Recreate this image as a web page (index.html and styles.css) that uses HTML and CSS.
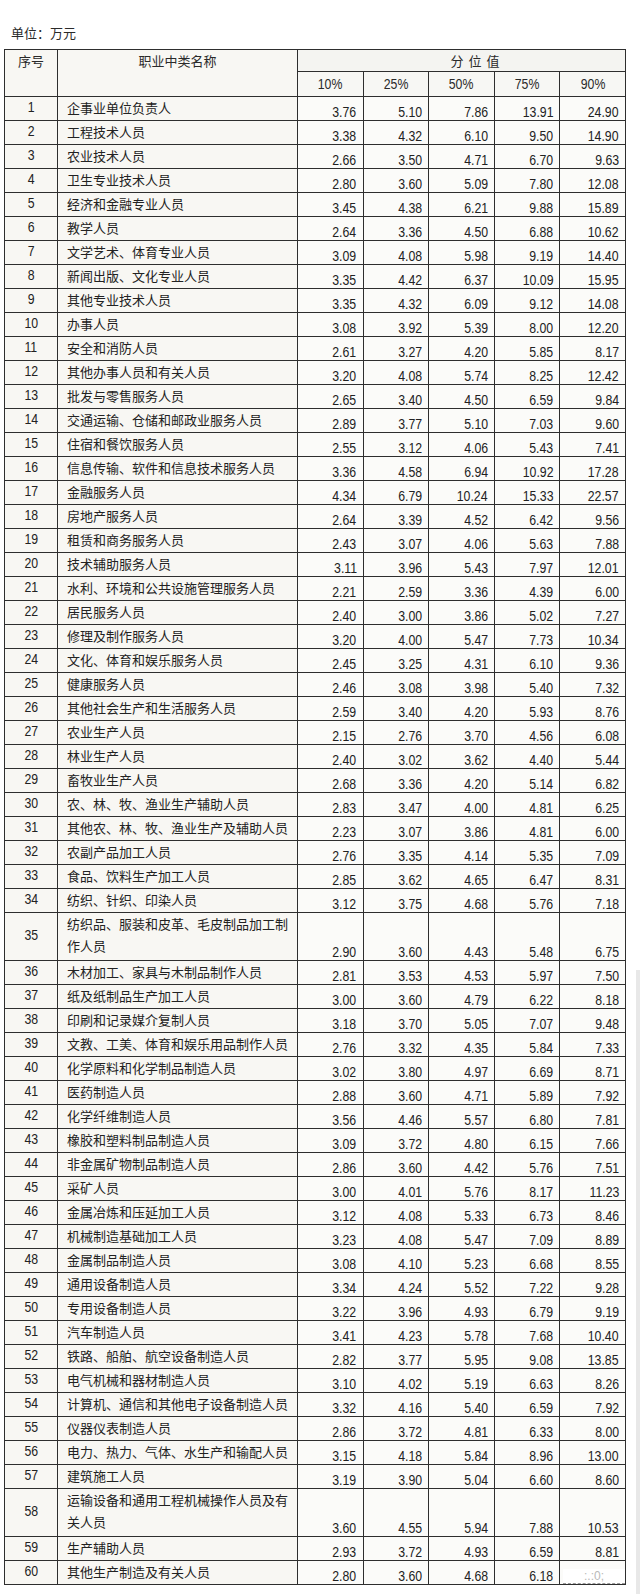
FILE: index.html
```html
<!DOCTYPE html>
<html lang="zh">
<head>
<meta charset="utf-8">
<title>分位值</title>
<link rel="stylesheet" href="styles.css">
</head>
<body>
<div class="page">
  <div class="unit">单位：万元</div>
  <table class="tbl">
    <colgroup>
      <col class="c-no"><col class="c-name"><col class="c-v"><col class="c-v"><col class="c-v"><col class="c-v"><col class="c-v">
    </colgroup>
    <thead>
      <tr class="hr1">
        <th class="h-no" rowspan="2">序号</th>
        <th class="h-name" rowspan="2">职业中类名称</th>
        <th class="h-span" colspan="5">分位值</th>
      </tr>
      <tr class="hr2">
        <th class="h-pct"><span>10%</span></th><th class="h-pct"><span>25%</span></th><th class="h-pct"><span>50%</span></th><th class="h-pct"><span>75%</span></th><th class="h-pct"><span>90%</span></th>
      </tr>
    </thead>
    <tbody>
<tr><td class="no"><span>1</span></td><td class="nm">企事业单位负责人</td><td class="v"><span>3.76</span></td><td class="v"><span>5.10</span></td><td class="v"><span>7.86</span></td><td class="v"><span>13.91</span></td><td class="v"><span>24.90</span></td></tr>
<tr><td class="no"><span>2</span></td><td class="nm">工程技术人员</td><td class="v"><span>3.38</span></td><td class="v"><span>4.32</span></td><td class="v"><span>6.10</span></td><td class="v"><span>9.50</span></td><td class="v"><span>14.90</span></td></tr>
<tr><td class="no"><span>3</span></td><td class="nm">农业技术人员</td><td class="v"><span>2.66</span></td><td class="v"><span>3.50</span></td><td class="v"><span>4.71</span></td><td class="v"><span>6.70</span></td><td class="v"><span>9.63</span></td></tr>
<tr><td class="no"><span>4</span></td><td class="nm">卫生专业技术人员</td><td class="v"><span>2.80</span></td><td class="v"><span>3.60</span></td><td class="v"><span>5.09</span></td><td class="v"><span>7.80</span></td><td class="v"><span>12.08</span></td></tr>
<tr><td class="no"><span>5</span></td><td class="nm">经济和金融专业人员</td><td class="v"><span>3.45</span></td><td class="v"><span>4.38</span></td><td class="v"><span>6.21</span></td><td class="v"><span>9.88</span></td><td class="v"><span>15.89</span></td></tr>
<tr><td class="no"><span>6</span></td><td class="nm">教学人员</td><td class="v"><span>2.64</span></td><td class="v"><span>3.36</span></td><td class="v"><span>4.50</span></td><td class="v"><span>6.88</span></td><td class="v"><span>10.62</span></td></tr>
<tr><td class="no"><span>7</span></td><td class="nm">文学艺术、体育专业人员</td><td class="v"><span>3.09</span></td><td class="v"><span>4.08</span></td><td class="v"><span>5.98</span></td><td class="v"><span>9.19</span></td><td class="v"><span>14.40</span></td></tr>
<tr><td class="no"><span>8</span></td><td class="nm">新闻出版、文化专业人员</td><td class="v"><span>3.35</span></td><td class="v"><span>4.42</span></td><td class="v"><span>6.37</span></td><td class="v"><span>10.09</span></td><td class="v"><span>15.95</span></td></tr>
<tr><td class="no"><span>9</span></td><td class="nm">其他专业技术人员</td><td class="v"><span>3.35</span></td><td class="v"><span>4.32</span></td><td class="v"><span>6.09</span></td><td class="v"><span>9.12</span></td><td class="v"><span>14.08</span></td></tr>
<tr><td class="no"><span>10</span></td><td class="nm">办事人员</td><td class="v"><span>3.08</span></td><td class="v"><span>3.92</span></td><td class="v"><span>5.39</span></td><td class="v"><span>8.00</span></td><td class="v"><span>12.20</span></td></tr>
<tr><td class="no"><span>11</span></td><td class="nm">安全和消防人员</td><td class="v"><span>2.61</span></td><td class="v"><span>3.27</span></td><td class="v"><span>4.20</span></td><td class="v"><span>5.85</span></td><td class="v"><span>8.17</span></td></tr>
<tr><td class="no"><span>12</span></td><td class="nm">其他办事人员和有关人员</td><td class="v"><span>3.20</span></td><td class="v"><span>4.08</span></td><td class="v"><span>5.74</span></td><td class="v"><span>8.25</span></td><td class="v"><span>12.42</span></td></tr>
<tr><td class="no"><span>13</span></td><td class="nm">批发与零售服务人员</td><td class="v"><span>2.65</span></td><td class="v"><span>3.40</span></td><td class="v"><span>4.50</span></td><td class="v"><span>6.59</span></td><td class="v"><span>9.84</span></td></tr>
<tr><td class="no"><span>14</span></td><td class="nm">交通运输、仓储和邮政业服务人员</td><td class="v"><span>2.89</span></td><td class="v"><span>3.77</span></td><td class="v"><span>5.10</span></td><td class="v"><span>7.03</span></td><td class="v"><span>9.60</span></td></tr>
<tr><td class="no"><span>15</span></td><td class="nm">住宿和餐饮服务人员</td><td class="v"><span>2.55</span></td><td class="v"><span>3.12</span></td><td class="v"><span>4.06</span></td><td class="v"><span>5.43</span></td><td class="v"><span>7.41</span></td></tr>
<tr><td class="no"><span>16</span></td><td class="nm">信息传输、软件和信息技术服务人员</td><td class="v"><span>3.36</span></td><td class="v"><span>4.58</span></td><td class="v"><span>6.94</span></td><td class="v"><span>10.92</span></td><td class="v"><span>17.28</span></td></tr>
<tr><td class="no"><span>17</span></td><td class="nm">金融服务人员</td><td class="v"><span>4.34</span></td><td class="v"><span>6.79</span></td><td class="v"><span>10.24</span></td><td class="v"><span>15.33</span></td><td class="v"><span>22.57</span></td></tr>
<tr><td class="no"><span>18</span></td><td class="nm">房地产服务人员</td><td class="v"><span>2.64</span></td><td class="v"><span>3.39</span></td><td class="v"><span>4.52</span></td><td class="v"><span>6.42</span></td><td class="v"><span>9.56</span></td></tr>
<tr><td class="no"><span>19</span></td><td class="nm">租赁和商务服务人员</td><td class="v"><span>2.43</span></td><td class="v"><span>3.07</span></td><td class="v"><span>4.06</span></td><td class="v"><span>5.63</span></td><td class="v"><span>7.88</span></td></tr>
<tr><td class="no"><span>20</span></td><td class="nm">技术辅助服务人员</td><td class="v"><span>3.11</span></td><td class="v"><span>3.96</span></td><td class="v"><span>5.43</span></td><td class="v"><span>7.97</span></td><td class="v"><span>12.01</span></td></tr>
<tr><td class="no"><span>21</span></td><td class="nm">水利、环境和公共设施管理服务人员</td><td class="v"><span>2.21</span></td><td class="v"><span>2.59</span></td><td class="v"><span>3.36</span></td><td class="v"><span>4.39</span></td><td class="v"><span>6.00</span></td></tr>
<tr><td class="no"><span>22</span></td><td class="nm">居民服务人员</td><td class="v"><span>2.40</span></td><td class="v"><span>3.00</span></td><td class="v"><span>3.86</span></td><td class="v"><span>5.02</span></td><td class="v"><span>7.27</span></td></tr>
<tr><td class="no"><span>23</span></td><td class="nm">修理及制作服务人员</td><td class="v"><span>3.20</span></td><td class="v"><span>4.00</span></td><td class="v"><span>5.47</span></td><td class="v"><span>7.73</span></td><td class="v"><span>10.34</span></td></tr>
<tr><td class="no"><span>24</span></td><td class="nm">文化、体育和娱乐服务人员</td><td class="v"><span>2.45</span></td><td class="v"><span>3.25</span></td><td class="v"><span>4.31</span></td><td class="v"><span>6.10</span></td><td class="v"><span>9.36</span></td></tr>
<tr><td class="no"><span>25</span></td><td class="nm">健康服务人员</td><td class="v"><span>2.46</span></td><td class="v"><span>3.08</span></td><td class="v"><span>3.98</span></td><td class="v"><span>5.40</span></td><td class="v"><span>7.32</span></td></tr>
<tr><td class="no"><span>26</span></td><td class="nm">其他社会生产和生活服务人员</td><td class="v"><span>2.59</span></td><td class="v"><span>3.40</span></td><td class="v"><span>4.20</span></td><td class="v"><span>5.93</span></td><td class="v"><span>8.76</span></td></tr>
<tr><td class="no"><span>27</span></td><td class="nm">农业生产人员</td><td class="v"><span>2.15</span></td><td class="v"><span>2.76</span></td><td class="v"><span>3.70</span></td><td class="v"><span>4.56</span></td><td class="v"><span>6.08</span></td></tr>
<tr><td class="no"><span>28</span></td><td class="nm">林业生产人员</td><td class="v"><span>2.40</span></td><td class="v"><span>3.02</span></td><td class="v"><span>3.62</span></td><td class="v"><span>4.40</span></td><td class="v"><span>5.44</span></td></tr>
<tr><td class="no"><span>29</span></td><td class="nm">畜牧业生产人员</td><td class="v"><span>2.68</span></td><td class="v"><span>3.36</span></td><td class="v"><span>4.20</span></td><td class="v"><span>5.14</span></td><td class="v"><span>6.82</span></td></tr>
<tr><td class="no"><span>30</span></td><td class="nm">农、林、牧、渔业生产辅助人员</td><td class="v"><span>2.83</span></td><td class="v"><span>3.47</span></td><td class="v"><span>4.00</span></td><td class="v"><span>4.81</span></td><td class="v"><span>6.25</span></td></tr>
<tr><td class="no"><span>31</span></td><td class="nm">其他农、林、牧、渔业生产及辅助人员</td><td class="v"><span>2.23</span></td><td class="v"><span>3.07</span></td><td class="v"><span>3.86</span></td><td class="v"><span>4.81</span></td><td class="v"><span>6.00</span></td></tr>
<tr><td class="no"><span>32</span></td><td class="nm">农副产品加工人员</td><td class="v"><span>2.76</span></td><td class="v"><span>3.35</span></td><td class="v"><span>4.14</span></td><td class="v"><span>5.35</span></td><td class="v"><span>7.09</span></td></tr>
<tr><td class="no"><span>33</span></td><td class="nm">食品、饮料生产加工人员</td><td class="v"><span>2.85</span></td><td class="v"><span>3.62</span></td><td class="v"><span>4.65</span></td><td class="v"><span>6.47</span></td><td class="v"><span>8.31</span></td></tr>
<tr><td class="no"><span>34</span></td><td class="nm">纺织、针织、印染人员</td><td class="v"><span>3.12</span></td><td class="v"><span>3.75</span></td><td class="v"><span>4.68</span></td><td class="v"><span>5.76</span></td><td class="v"><span>7.18</span></td></tr>
<tr class="tall"><td class="no"><span>35</span></td><td class="nm">纺织品、服装和皮革、毛皮制品加工制<br>作人员</td><td class="v"><span>2.90</span></td><td class="v"><span>3.60</span></td><td class="v"><span>4.43</span></td><td class="v"><span>5.48</span></td><td class="v"><span>6.75</span></td></tr>
<tr><td class="no"><span>36</span></td><td class="nm">木材加工、家具与木制品制作人员</td><td class="v"><span>2.81</span></td><td class="v"><span>3.53</span></td><td class="v"><span>4.53</span></td><td class="v"><span>5.97</span></td><td class="v"><span>7.50</span></td></tr>
<tr><td class="no"><span>37</span></td><td class="nm">纸及纸制品生产加工人员</td><td class="v"><span>3.00</span></td><td class="v"><span>3.60</span></td><td class="v"><span>4.79</span></td><td class="v"><span>6.22</span></td><td class="v"><span>8.18</span></td></tr>
<tr><td class="no"><span>38</span></td><td class="nm">印刷和记录媒介复制人员</td><td class="v"><span>3.18</span></td><td class="v"><span>3.70</span></td><td class="v"><span>5.05</span></td><td class="v"><span>7.07</span></td><td class="v"><span>9.48</span></td></tr>
<tr><td class="no"><span>39</span></td><td class="nm">文教、工美、体育和娱乐用品制作人员</td><td class="v"><span>2.76</span></td><td class="v"><span>3.32</span></td><td class="v"><span>4.35</span></td><td class="v"><span>5.84</span></td><td class="v"><span>7.33</span></td></tr>
<tr><td class="no"><span>40</span></td><td class="nm">化学原料和化学制品制造人员</td><td class="v"><span>3.02</span></td><td class="v"><span>3.80</span></td><td class="v"><span>4.97</span></td><td class="v"><span>6.69</span></td><td class="v"><span>8.71</span></td></tr>
<tr><td class="no"><span>41</span></td><td class="nm">医药制造人员</td><td class="v"><span>2.88</span></td><td class="v"><span>3.60</span></td><td class="v"><span>4.71</span></td><td class="v"><span>5.89</span></td><td class="v"><span>7.92</span></td></tr>
<tr><td class="no"><span>42</span></td><td class="nm">化学纤维制造人员</td><td class="v"><span>3.56</span></td><td class="v"><span>4.46</span></td><td class="v"><span>5.57</span></td><td class="v"><span>6.80</span></td><td class="v"><span>7.81</span></td></tr>
<tr><td class="no"><span>43</span></td><td class="nm">橡胶和塑料制品制造人员</td><td class="v"><span>3.09</span></td><td class="v"><span>3.72</span></td><td class="v"><span>4.80</span></td><td class="v"><span>6.15</span></td><td class="v"><span>7.66</span></td></tr>
<tr><td class="no"><span>44</span></td><td class="nm">非金属矿物制品制造人员</td><td class="v"><span>2.86</span></td><td class="v"><span>3.60</span></td><td class="v"><span>4.42</span></td><td class="v"><span>5.76</span></td><td class="v"><span>7.51</span></td></tr>
<tr><td class="no"><span>45</span></td><td class="nm">采矿人员</td><td class="v"><span>3.00</span></td><td class="v"><span>4.01</span></td><td class="v"><span>5.76</span></td><td class="v"><span>8.17</span></td><td class="v"><span>11.23</span></td></tr>
<tr><td class="no"><span>46</span></td><td class="nm">金属冶炼和压延加工人员</td><td class="v"><span>3.12</span></td><td class="v"><span>4.08</span></td><td class="v"><span>5.33</span></td><td class="v"><span>6.73</span></td><td class="v"><span>8.46</span></td></tr>
<tr><td class="no"><span>47</span></td><td class="nm">机械制造基础加工人员</td><td class="v"><span>3.23</span></td><td class="v"><span>4.08</span></td><td class="v"><span>5.47</span></td><td class="v"><span>7.09</span></td><td class="v"><span>8.89</span></td></tr>
<tr><td class="no"><span>48</span></td><td class="nm">金属制品制造人员</td><td class="v"><span>3.08</span></td><td class="v"><span>4.10</span></td><td class="v"><span>5.23</span></td><td class="v"><span>6.68</span></td><td class="v"><span>8.55</span></td></tr>
<tr><td class="no"><span>49</span></td><td class="nm">通用设备制造人员</td><td class="v"><span>3.34</span></td><td class="v"><span>4.24</span></td><td class="v"><span>5.52</span></td><td class="v"><span>7.22</span></td><td class="v"><span>9.28</span></td></tr>
<tr><td class="no"><span>50</span></td><td class="nm">专用设备制造人员</td><td class="v"><span>3.22</span></td><td class="v"><span>3.96</span></td><td class="v"><span>4.93</span></td><td class="v"><span>6.79</span></td><td class="v"><span>9.19</span></td></tr>
<tr><td class="no"><span>51</span></td><td class="nm">汽车制造人员</td><td class="v"><span>3.41</span></td><td class="v"><span>4.23</span></td><td class="v"><span>5.78</span></td><td class="v"><span>7.68</span></td><td class="v"><span>10.40</span></td></tr>
<tr><td class="no"><span>52</span></td><td class="nm">铁路、船舶、航空设备制造人员</td><td class="v"><span>2.82</span></td><td class="v"><span>3.77</span></td><td class="v"><span>5.95</span></td><td class="v"><span>9.08</span></td><td class="v"><span>13.85</span></td></tr>
<tr><td class="no"><span>53</span></td><td class="nm">电气机械和器材制造人员</td><td class="v"><span>3.10</span></td><td class="v"><span>4.02</span></td><td class="v"><span>5.19</span></td><td class="v"><span>6.63</span></td><td class="v"><span>8.26</span></td></tr>
<tr><td class="no"><span>54</span></td><td class="nm">计算机、通信和其他电子设备制造人员</td><td class="v"><span>3.32</span></td><td class="v"><span>4.16</span></td><td class="v"><span>5.40</span></td><td class="v"><span>6.59</span></td><td class="v"><span>7.92</span></td></tr>
<tr><td class="no"><span>55</span></td><td class="nm">仪器仪表制造人员</td><td class="v"><span>2.86</span></td><td class="v"><span>3.72</span></td><td class="v"><span>4.81</span></td><td class="v"><span>6.33</span></td><td class="v"><span>8.00</span></td></tr>
<tr><td class="no"><span>56</span></td><td class="nm">电力、热力、气体、水生产和输配人员</td><td class="v"><span>3.15</span></td><td class="v"><span>4.18</span></td><td class="v"><span>5.84</span></td><td class="v"><span>8.96</span></td><td class="v"><span>13.00</span></td></tr>
<tr><td class="no"><span>57</span></td><td class="nm">建筑施工人员</td><td class="v"><span>3.19</span></td><td class="v"><span>3.90</span></td><td class="v"><span>5.04</span></td><td class="v"><span>6.60</span></td><td class="v"><span>8.60</span></td></tr>
<tr class="tall"><td class="no"><span>58</span></td><td class="nm">运输设备和通用工程机械操作人员及有<br>关人员</td><td class="v"><span>3.60</span></td><td class="v"><span>4.55</span></td><td class="v"><span>5.94</span></td><td class="v"><span>7.88</span></td><td class="v"><span>10.53</span></td></tr>
<tr><td class="no"><span>59</span></td><td class="nm">生产辅助人员</td><td class="v"><span>2.93</span></td><td class="v"><span>3.72</span></td><td class="v"><span>4.93</span></td><td class="v"><span>6.59</span></td><td class="v"><span>8.81</span></td></tr>
<tr><td class="no"><span>60</span></td><td class="nm">其他生产制造及有关人员</td><td class="v"><span>2.80</span></td><td class="v"><span>3.60</span></td><td class="v"><span>4.68</span></td><td class="v"><span>6.18</span></td><td class="v last"><b class="wm">:.:0;</b></td></tr>
    </tbody>
  </table>
  <div class="sbar"></div>
</div>
</body>
</html>
```

FILE: styles.css
```css
html, body {
  margin: 0;
  padding: 0;
  background: #ffffff;
}
body {
  width: 644px;
  height: 1594px;
  overflow: hidden;
  font-family: "Noto Sans CJK SC", "Noto Sans", sans-serif;
  color: #222;
}
.page {
  position: relative;
  padding: 24px 0 0 4px;
}
.unit {
  font-size: 13px;
  line-height: 18px;
  height: 25px;
  padding-left: 7px;
  color: #2a2a2a;
}
.tbl {
  border-collapse: collapse;
  table-layout: fixed;
  width: 621px;
  background: #f8f7f3;
  border: 1.5px solid #222;
}
.c-no { width: 53px; }
.c-name { width: 240px; }
.c-v { width: 65.6px; }
.tbl tr { height: 24px; }
.tbl tr.hr1 { height: 22px; }
.tbl tr.hr2 { height: 25px; }
.tbl tr.tall { height: 48px; }
.tbl th, .tbl td {
  border: 1px solid #2e2e2e;
  padding: 0;
  overflow: hidden;
  white-space: nowrap;
  font-family: "Liberation Sans", Arial, sans-serif;
  font-size: 15px;
  line-height: 16px;
}
.tbl th {
  font-weight: normal;
  color: #2a2a2a;
}
.tbl th span, .tbl td span {
  display: inline-block;
  font-size: 15px;
  line-height: 16px;
  transform: scaleX(0.82);
}
.h-no, .h-name, .h-span {
  font-family: "Noto Sans CJK SC", sans-serif !important;
  font-size: 13px !important;
  line-height: 20px !important;
}
.h-no, .h-name {
  vertical-align: top;
  text-align: center;
  padding-top: 1px !important;
}
.h-span {
  text-align: center;
  letter-spacing: 5px;
  padding-left: 32px !important;
  background: #f4f4f1;
}
.h-pct {
  text-align: center;
  background: #f7f7f4;
  vertical-align: middle;
}
.h-pct span { transform-origin: center; }
.no {
  text-align: center;
  vertical-align: middle;
  padding-bottom: 3px !important;
}
.no span { transform-origin: center; }
.nm {
  font-family: "Noto Sans CJK SC", sans-serif !important;
  font-size: 13px !important;
  line-height: 20px !important;
  vertical-align: top;
  text-align: left;
  padding-left: 9px !important;
  padding-top: 1px !important;
}
.tall .nm { line-height: 22px !important; padding-top: 0 !important; }
.v {
  vertical-align: bottom;
  text-align: right;
  padding-right: 6px !important;
  padding-bottom: 0 !important;
  background: #fbfbf9;
}
.v span { transform-origin: right center; }
.v.last {
  position: relative;
}
.wm {
  position: absolute;
  right: 0;
  bottom: 0;
  width: 62px;
  height: 14px;
  background: #ffffff;
  color: #b9b9b9;
  font-weight: normal;
  font-size: 12px;
  line-height: 14px;
  text-align: center;
  border-bottom: 1px dashed #999;
}
.sbar {
  position: absolute;
  right: 4px;
  top: 970px;
  width: 4px;
  height: 624px;
  background: #e8e8e8;
}
```
